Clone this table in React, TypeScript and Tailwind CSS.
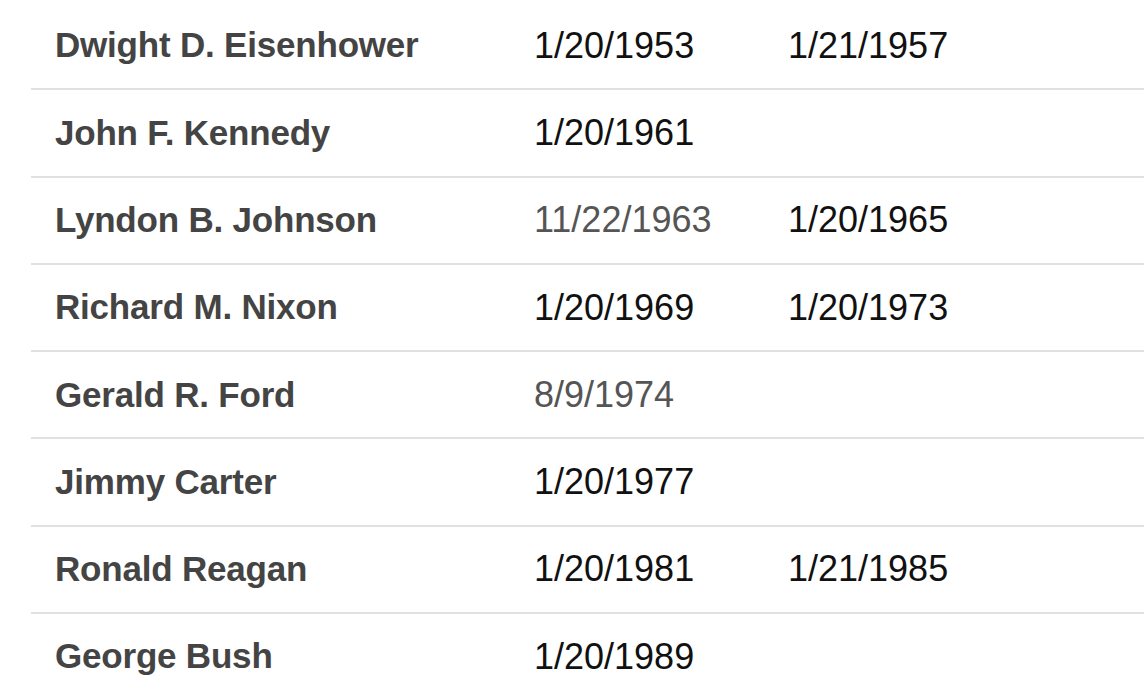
import React from "react";

type Row = { name: string; a: string; aGray?: boolean; b?: string };

const rows: Row[] = [
  { name: "Dwight D. Eisenhower", a: "1/20/1953", b: "1/21/1957" },
  { name: "John F. Kennedy", a: "1/20/1961" },
  { name: "Lyndon B. Johnson", a: "11/22/1963", aGray: true, b: "1/20/1965" },
  { name: "Richard M. Nixon", a: "1/20/1969", b: "1/20/1973" },
  { name: "Gerald R. Ford", a: "8/9/1974", aGray: true },
  { name: "Jimmy Carter", a: "1/20/1977" },
  { name: "Ronald Reagan", a: "1/20/1981", b: "1/21/1985" },
  { name: "George Bush", a: "1/20/1989" },
];

export default function App() {
  return (
    <div
      className="w-[1144px] h-[697px] overflow-hidden bg-white pt-[3px] pl-[31px]"
      style={{ fontFamily: '"Liberation Sans", Arial, sans-serif' }}
    >
      {rows.map((r) => (
        <div
          key={r.name}
          className="flex items-center h-[87.3px] border-b-2 border-[#e0e0e0] pl-[24px]"
        >
          <div className="w-[479px] text-[35px] font-bold text-[#444444] tracking-[-0.2px]">
            {r.name}
          </div>
          <div
            className={
              "w-[254px] text-[36px] " + (r.aGray ? "text-[#555555]" : "text-[#111111]")
            }
          >
            {r.a}
          </div>
          <div className="text-[36px] text-[#111111]">{r.b ?? ""}</div>
        </div>
      ))}
    </div>
  );
}
